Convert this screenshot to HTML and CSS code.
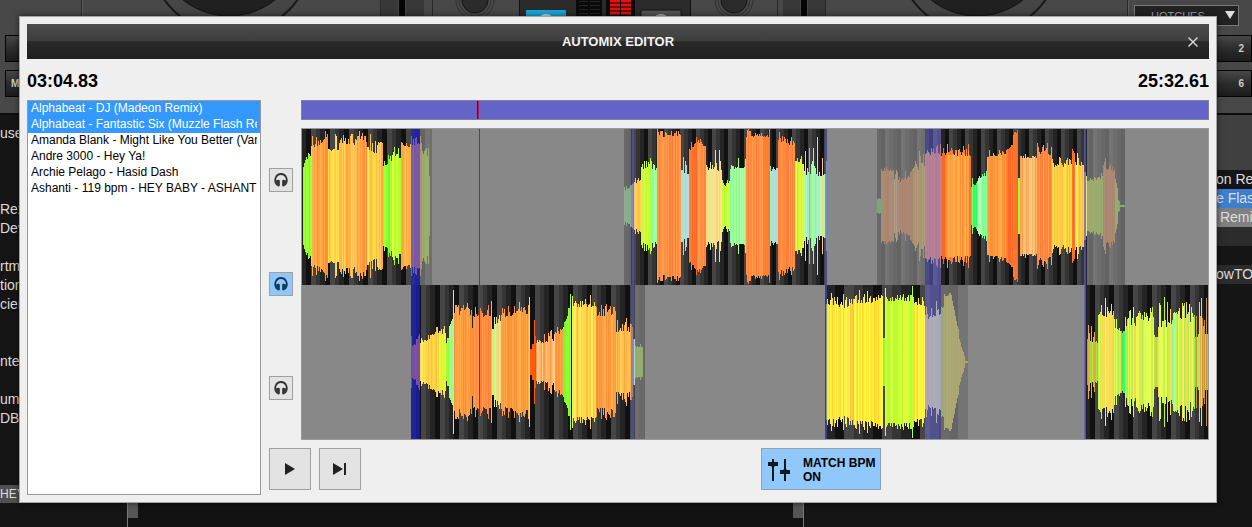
FILE: index.html
```html
<!DOCTYPE html>
<html lang="en">

<head>
  <meta charset="utf-8">
  <meta name="viewport" content="width=device-width, initial-scale=1">
  <title>Automix Editor</title>
  <link rel="stylesheet" href="styles.css">
</head>

<body>

  <div class="app">
    <div class="decks">
      <svg class="deck-art" width="1252" height="115" viewBox="0 0 1252 115" aria-hidden="true">
        <path d="M81.5 0V115M380.5 0V115M432.5 0V115M777.5 0V115M825.5 0V115M1127.5 0V115" stroke="#2a2a2a"/>
        <path d="M82.5 0V115M1128.5 0V115" stroke="#5c5c5c"/>
        <g fill="#383838">
          <rect x="381" y="0" width="17" height="20"/>
          <rect x="406" y="0" width="18" height="20"/>
          <rect x="783" y="0" width="17" height="20"/>
          <rect x="808" y="0" width="17" height="20"/>
        </g>
        <path d="M402 0V20M804 0V20" stroke="#050505" stroke-width="6"/>
        <g fill="#454545" stroke="#191919" stroke-width="2">
          <circle cx="231" cy="-48" r="82"/>
          <circle cx="979" cy="-48" r="82"/>
        </g>
        <g fill="#202020" stroke="#131313">
          <circle cx="229" cy="-58" r="74"/>
          <circle cx="977" cy="-58" r="74"/>
        </g>
        <g fill="none" stroke="#303030">
          <circle cx="475" cy="0" r="19"/>
          <circle cx="475" cy="0" r="16"/>
          <circle cx="734" cy="0" r="19"/>
          <circle cx="734" cy="0" r="16"/>
        </g>
        <g fill="#2b2b2b" stroke="#151515">
          <circle cx="475" cy="0" r="13"/>
          <circle cx="734" cy="0" r="13"/>
        </g>
        <path d="M519.5 -1H690.5V30H519.5z" fill="#2b2b2b" stroke="#111"/>
        <rect x="526" y="10" width="40" height="12" rx="1" fill="#1ba5d8"/>
        <ellipse cx="546" cy="17" rx="6" ry="3" fill="#bfe6f5"/>
        <rect x="641" y="10" width="40" height="12" rx="1" fill="#555" stroke="#151515"/>
        <ellipse cx="661" cy="17" rx="6" ry="3" fill="#aaa"/>
        <rect x="576" y="0" width="26" height="16" fill="#0a0a0a"/>
        <rect x="606" y="0" width="29" height="16" fill="#0a0a0a"/>
        <path d="M579 1.500H588M590 1.500H600M579 5.500H588M590 5.500H600M579 9.500H588M590 9.500H600M579 13.500H588M590 13.500H600" stroke="#252525"/>
        <path d="M610 1H620M621 1H631M610 5H620M621 5H631M610 9H620M621 9H631M610 13H620M621 13H631" stroke="#e01212" stroke-width="3"/>
      </svg>
      <div class="pads pads-left">
        <button class="pad">&nbsp;</button>
        <button class="pad">M</button>
      </div>
      <div class="pads pads-right">
        <button class="hotcues">HOTCUES
          <svg width="12" height="9" viewBox="0 0 12 9" aria-hidden="true"><path d="M1 0H11L6 8z" fill="#ddd"/></svg>
        </button>
        <button class="pad">2</button>
        <button class="pad">6</button>
      </div>
    </div>

    <div class="browser">
      <ul class="rows rows-left">
        <li class="row">use</li>
        <li class="row"></li>
        <li class="row"></li>
        <li class="row"></li>
        <li class="row">Rex</li>
        <li class="row">Dev</li>
        <li class="row"></li>
        <li class="row">rtme</li>
        <li class="row">tion</li>
        <li class="row">cien</li>
        <li class="row"></li>
        <li class="row"></li>
        <li class="row">nte</li>
        <li class="row"></li>
        <li class="row">umb</li>
        <li class="row">DB</li>
        <li class="row"></li>
        <li class="row"></li>
        <li class="row"></li>
        <li class="row row-small">HEY</li>
      </ul>
      <ul class="rows rows-right">
        <li class="row">on Re</li>
        <li class="row row-blue">e Flas</li>
        <li class="row row-grey">&nbsp;Remi</li>
        <li class="row row-dark"></li>
        <li class="row"></li>
        <li class="row row-dark">owTOO</li>
      </ul>
    </div>

    <div class="footer">
      <div class="footer-panel"></div>
    </div>
  </div>

  <div class="overlay">
    <div class="dialog" role="dialog" aria-labelledby="title">
      <div class="titlebar">
        <h1 id="title">AUTOMIX EDITOR</h1>
        <button class="close" aria-label="Close">
          <svg width="12" height="12" viewBox="0 0 12 12"><path d="M1.500 1.500L10.500 10.500M10.500 1.500L1.500 10.500" stroke="#ddd" stroke-width="1.400"/></svg>
        </button>
      </div>

      <div class="times">
        <span>03:04.83</span>
        <span>25:32.61</span>
      </div>

      <div class="editor">
        <select class="playlist" multiple aria-label="Playlist">
          <option selected>Alphabeat - DJ (Madeon Remix)</option>
          <option selected>Alphabeat - Fantastic Six (Muzzle Flash Remix)</option>
          <option>Amanda Blank - Might Like You Better (Van</option>
          <option>Andre 3000 - Hey Ya!</option>
          <option>Archie Pelago - Hasid Dash</option>
          <option>Ashanti - 119 bpm - HEY BABY - ASHANTI</option>
        </select>

        <div class="mixer">
          <div class="tracks">
            <div class="monitors">
              <button class="monitor" aria-label="Listen to deck 1">
                <svg width="14" height="16" viewBox="0 0 14 16"><path d="M3 13C.8 10.500 1 7.500 1.800 5.500C2.800 3 4.700 2 7 2S11.200 3 12.200 5.500C13 7.500 13.200 10.500 11 13" fill="none" stroke="currentColor" stroke-width="1.800"/><path d="M2 8.500Q5 7 5.800 8.500V14Q4 15.200 2.500 13zM12 8.500Q9 7 8.200 8.500V14Q10 15.200 11.500 13z" fill="currentColor"/></svg>
              </button>
              <button class="monitor active" aria-label="Listen to mix">
                <svg width="14" height="16" viewBox="0 0 14 16"><path d="M3 13C.8 10.500 1 7.500 1.800 5.500C2.800 3 4.700 2 7 2S11.200 3 12.200 5.500C13 7.500 13.200 10.500 11 13" fill="none" stroke="currentColor" stroke-width="1.800"/><path d="M2 8.500Q5 7 5.800 8.500V14Q4 15.200 2.500 13zM12 8.500Q9 7 8.200 8.500V14Q10 15.200 11.500 13z" fill="currentColor"/></svg>
              </button>
              <button class="monitor" aria-label="Listen to deck 2">
                <svg width="14" height="16" viewBox="0 0 14 16"><path d="M3 13C.8 10.500 1 7.500 1.800 5.500C2.800 3 4.700 2 7 2S11.200 3 12.200 5.500C13 7.500 13.200 10.500 11 13" fill="none" stroke="currentColor" stroke-width="1.800"/><path d="M2 8.500Q5 7 5.800 8.500V14Q4 15.200 2.500 13zM12 8.500Q9 7 8.200 8.500V14Q10 15.200 11.500 13z" fill="currentColor"/></svg>
              </button>
            </div>
            <div class="timeline">
              <div class="overview"><div class="overview-mark"></div></div>
              <canvas class="waves" id="waves" width="906" height="310"></canvas>
            </div>
          </div>

          <div class="controls">
            <button class="control" aria-label="Play">
              <svg width="16" height="16" viewBox="0 0 16 16"><path d="M3 2L13 8L3 14z" fill="#222"/></svg>
            </button>
            <button class="control" aria-label="Next">
              <svg width="16" height="16" viewBox="0 0 16 16"><path d="M1 2L11 8L1 14zM12 2H14V14H12z" fill="#222"/></svg>
            </button>
            <button class="match active">
              <svg width="24" height="24" viewBox="0 0 24 24"><path d="M6 1V23M18 1V23" stroke="#111820" stroke-width="2"/><path d="M1 4H11V8H8L6 10L4 8H1zM13 12H16L18 10L20 12H23V16H13z" fill="#111820"/></svg>
              <span>MATCH BPM<br>ON</span>
            </button>
          </div>
        </div>
      </div>
    </div>
  </div>

  <script src="waves.js"></script>
</body>

</html>
```
FILE: styles.css
```css
* {
  box-sizing: border-box;
}

body {
  margin: 0;
  background-color: #151515;
  font-family: "Liberation Sans", Arial, Helvetica, sans-serif;
  font-size: 13px;
}

button {
  font-family: inherit;
  cursor: pointer;
}

/* Player behind the dialog */
.app {
  display: flex;
  flex-direction: column;
  height: 100vh;
  overflow: hidden;
}

.decks {
  position: relative;
  flex: none;
  display: flex;
  justify-content: space-between;
  height: 115px;
  overflow: hidden;
  background-color: #484848;
  border-bottom: 2px solid #0d0d0d;
}

.deck-art {
  position: absolute;
  top: 0;
  left: 0;
}

.pads {
  position: relative;
  display: flex;
  flex-direction: column;
  gap: 8px;
}

.pads-left {
  padding: 35px 0 0 5px;
}

.pads-right {
  padding-top: 5px;
  align-items: flex-end;
}

.pad {
  width: 60px;
  height: 27px;
  padding: 0 0 0 5px;
  border: 1px solid #050505;
  background: linear-gradient(#484848, #2c2c2c 50%, #1c1c1c);
  color: #ccc;
  font-size: 10px;
  font-weight: bold;
  text-align: left;
}

.pads-right .pad {
  padding: 0 7px;
  text-align: right;
}

.hotcues {
  display: flex;
  align-items: center;
  justify-content: space-between;
  width: 105px;
  height: 21px;
  margin: 0 13px 1px 0;
  padding: 0 2px 0 16px;
  border: 1px solid #777;
  background-color: #222;
  color: #aaa;
  font-size: 11px;
}

.browser {
  flex: 1;
  display: flex;
  justify-content: space-between;
  overflow: hidden;
}

.rows {
  margin: 0;
  padding: 0;
  list-style: none;
  color: #ddd;
  font-size: 14px;
}

.rows-left {
  width: 20px;
  padding-top: 9px;
}

.rows-right {
  width: 36px;
  border-top: 55px solid #404040;
}

.row {
  height: 19px;
  line-height: 19px;
  overflow: hidden;
  white-space: nowrap;
}

.row-blue {
  background-color: #3d7fcc;
}

.row-grey {
  background-color: #808080;
}

.row-dark {
  background-color: #2c2c2c;
}

.row-small {
  background-color: #505050;
  font-size: 12px;
}

.footer {
  flex: none;
  height: 24px;
  padding: 0 448px 0 127px;
}

.footer-panel {
  height: 24px;
  border: solid #777;
  border-width: 0 1px;
  background:
    linear-gradient(#555, #555) left top / 10px 15px no-repeat,
    linear-gradient(#555, #555) right top / 10px 15px no-repeat,
    #121212;
}

/* Dialog */
.overlay {
  position: absolute;
  inset: 0;
  display: flex;
  padding: 16px 35px 24px 19px;
}

.dialog {
  flex: 1;
  display: flex;
  flex-direction: column;
  min-width: 0;
  padding: 7px;
  border: 1px solid #a5a5a5;
  background-color: #efefef;
  box-shadow: 0 0 6px rgba(0, 0, 0, 0.6);
}

.titlebar {
  flex: none;
  display: grid;
  grid-template-columns: 32px 1fr 32px;
  align-items: center;
  height: 35px;
  background: linear-gradient(#4c4c4c, #3e3e3e 49%, #2b2b2b 50%, #1e1e1e);
  color: #f2f2f2;
}

.titlebar h1 {
  grid-column: 2;
  margin: 0;
  font-size: 13px;
  line-height: 18px;
  text-align: center;
}

.close {
  display: flex;
  justify-content: center;
  padding: 0;
  border: none;
  background: none;
}

.times {
  flex: none;
  display: flex;
  justify-content: space-between;
  height: 41px;
  line-height: 45px;
  color: #000;
  font-size: 18px;
  font-weight: bold;
}

.editor {
  flex: 1;
  display: flex;
  gap: 8px;
  min-height: 0;
}

.playlist {
  flex: none;
  width: 234px;
  padding: 0;
  border: 1px solid #999;
  border-radius: 0;
  outline: none;
  overflow: hidden;
  background-color: #fff;
  color: #000;
  font-family: inherit;
  font-size: 12px;
}

.playlist option {
  min-height: 16px;
  height: 16px;
  padding: 0 3px;
  line-height: 16px;
  overflow: clip;
  overflow-clip-margin: content-box;
}

.playlist option:checked {
  background: linear-gradient(#3399ff, #3399ff);
  -webkit-text-fill-color: #fff;
}

.mixer {
  flex: 1;
  display: flex;
  flex-direction: column;
  gap: 8px;
  min-width: 0;
  padding-bottom: 5px;
}

.tracks {
  flex: 1;
  display: flex;
  gap: 8px;
  min-height: 0;
}

.monitors {
  flex: none;
  display: flex;
  flex-direction: column;
  justify-content: space-between;
  padding: 68px 0 40px;
}

.monitor,
.control {
  display: flex;
  align-items: center;
  justify-content: center;
  padding: 0;
  border: 1px solid #a0a0a0;
  background-color: #e3e3e3;
  color: #333;
}

.monitor {
  width: 24px;
  height: 24px;
}

.monitor.active,
.match.active {
  background-color: #91c8fb;
}

.monitor.active {
  color: #12395c;
}

.timeline {
  flex: 1;
  display: flex;
  flex-direction: column;
  gap: 8px;
  min-width: 0;
}

.overview {
  position: relative;
  flex: none;
  height: 20px;
  border: 1px solid #8080a0;
  background-color: #6464c8;
}

.overview-mark {
  position: absolute;
  top: 0;
  bottom: 0;
  left: 19.3%;
  width: 2px;
  border-left: 1px solid #401050;
  background-color: #c01848;
}

.waves {
  flex: 1;
  display: block;
  width: 100%;
  min-height: 0;
  border: 1px solid #999;
  background-color: #888;
}

.controls {
  flex: none;
  display: flex;
  gap: 8px;
}

.control {
  width: 42px;
  height: 42px;
}

.match {
  display: flex;
  align-items: center;
  gap: 12px;
  width: 120px;
  height: 42px;
  margin: 0 328px 0 auto;
  padding: 2px 0 0 5px;
  border: 1px solid #8fa0b0;
  color: #000;
  font-size: 12px;
  font-weight: bold;
  line-height: 14px;
  text-align: left;
  white-space: nowrap;
}
```
FILE: waves.js
```js
const canvas = document.getElementById('waves');
const ctx = canvas.getContext('2d');

const colors = {
  green: ['#8cff30', '#a0ff35', '#80f82c'],
  lime: ['#d4ff35', '#c0ff3a', '#e8f53c', '#b0ff30'],
  yellow: ['#ffd84a', '#ffe04e', '#f5ee60', '#ffbe40', '#ffd040'],
  sun: ['#fff53a', '#ffea38', '#f2e83a', '#ffd82e', '#fff850'],
  amber: ['#ffb445', '#ffc050', '#ffa63c', '#ffd35a'],
  orange: ['#ff9c3e', '#ffa446', '#ff8e34', '#ffb048'],
  coral: ['#ff9142', '#ff8a3c', '#ff9c50', '#ff7e3a'],
  ember: ['#ff7428', '#ff6824', '#ff7e30'],
  red: ['#ff5a10', '#ff4c0a'],
  peach: ['#ffb060', '#ffc078', '#ff9c48', '#ffcf90'],
  mint: ['#80ff98', '#98ffa0', '#a8ff90', '#b0ffb0'],
  pale: ['#e8e080', '#f0d880', '#d8f080', '#ffe090'],
  ice: ['#a8dcd8', '#b8e0e0', '#c8d8e0', '#a0e8d0'],
  spring: ['#30ff60', '#50ff68', '#70ff70'],
  mixed: ['#e8ff50', '#c8f048', '#f5e058', '#a8f050', '#dcff58', '#ffd850'],
  rough: ['#e8a840', '#d8e048', '#c8943a', '#a0e848']
};

// start, end, half height at start, half height at end, jitter, colour
const tracks = [
  {
    lane: 0, from: 0, to: 131, beat: 19, parts: [
      [2, 11, 42, 54, 6, 'green'], [11, 27, 62, 68, 9, 'orange'], [27, 39, 58, 60, 8, 'yellow'],
      [39, 56, 66, 62, 6, 'amber'], [56, 66, 68, 68, 8, 'orange'], [66, 76, 60, 56, 8, 'yellow'],
      [76, 82, 62, 66, 5, 'amber'], [82, 91, 42, 46, 5, 'green'], [91, 100, 50, 50, 6, 'lime'],
      [100, 121, 60, 65, 6, 'amber'], [121, 128, 54, 50, 4, 'lime'], [128, 129, 30, 30, 0, 'lime']
    ]
  },
  {
    lane: 1, from: 110, to: 344, beat: 19, parts: [
      [110, 119, 18, 22, 5, 'coral'], [119, 130, 20, 27, 5, 'yellow'], [130, 145, 28, 28, 6, 'yellow'],
      [138, 145, 28, 28, 5, 'lime'], [145, 148, 20, 26, 2, 'green'], [148, 152, 38, 44, 4, 'mint'],
      [152, 153, 72, 72, 0, 'lime'], [153, 171, 50, 50, 7, 'orange'], [171, 172, 34, 34, 0, 'orange'],
      [172, 191, 48, 48, 6, 'coral'], [190, 191, 61, 61, 0, 'amber'], [191, 200, 36, 44, 8, 'pale'],
      [200, 228, 48, 52, 7, 'orange'], [228, 229, 65, 65, 0, 'amber'], [229, 231, 13, 13, 0, 'red'],
      [231, 235, 20, 26, 8, 'red'], [233, 234, 42, 42, 0, 'red'], [235, 254, 22, 24, 7, 'peach'],
      [254, 262, 26, 36, 6, 'orange'], [262, 269, 32, 60, 4, 'green'], [269, 270, 68, 68, 0, 'lime'],
      [271, 295, 58, 58, 6, 'yellow'], [295, 315, 48, 50, 6, 'orange'], [315, 332, 34, 34, 8, 'amber'],
      [332, 334, 20, 20, 3, 'ice'], [334, 342, 16, 16, 3, 'lime']
    ]
  },
  {
    lane: 0, from: 323, to: 526, beat: 16, parts: [
      [323, 330, 16, 20, 4, 'mint'], [330, 332, 20, 22, 2, 'ice'], [332, 340, 24, 28, 5, 'amber'],
      [340, 350, 40, 42, 7, 'lime'], [350, 356, 38, 38, 5, 'mint'], [356, 380, 71, 71, 4, 'coral'],
      [380, 388, 36, 36, 8, 'ice'], [388, 396, 58, 64, 5, 'ember'], [396, 405, 66, 60, 4, 'coral'],
      [405, 421, 40, 40, 10, 'pale'], [421, 429, 20, 24, 4, 'lime'], [429, 445, 40, 40, 6, 'mint'],
      [445, 463, 71, 71, 4, 'coral'], [463, 469, 70, 70, 4, 'ember'], [469, 477, 36, 38, 3, 'ice'],
      [477, 494, 68, 60, 5, 'coral'], [494, 503, 46, 42, 4, 'lime'], [503, 526, 33, 33, 7, 'mint'],
      [506, 508, 33, 33, 5, 'ice'], [514, 516, 33, 33, 5, 'ice'],
      [504, 505, 55, 55, 0, 'peach'], [508, 509, 58, 58, 0, 'peach'], [512, 513, 58, 58, 0, 'peach'],
      [516, 517, 69, 69, 0, 'peach'], [521, 522, 48, 48, 0, 'peach'], [525, 526, 45, 45, 0, 'ice']
    ]
  },
  {
    lane: 0, from: 576, to: 824, beat: 16, parts: [
      [576, 580, 6, 8, 1, 'spring'], [580, 593, 36, 36, 3, 'coral'], [593, 597, 24, 40, 5, 'peach'],
      [597, 612, 26, 32, 6, 'coral'], [612, 624, 36, 44, 8, 'amber'], [624, 640, 54, 54, 6, 'coral'],
      [640, 670, 53, 52, 6, 'ember'], [645, 668, 53, 52, 5, 'orange'], [670, 676, 20, 24, 5, 'spring'],
      [676, 686, 26, 34, 4, 'mint'], [686, 705, 50, 54, 4, 'orange'], [705, 712, 56, 62, 2, 'ember'],
      [712, 717, 72, 72, 3, 'ember'], [717, 719, 28, 28, 0, 'green'], [719, 736, 49, 49, 2, 'peach'],
      [736, 751, 54, 54, 6, 'coral'], [751, 783, 41, 43, 6, 'yellow'], [771, 774, 54, 56, 4, 'ember'],
      [783, 786, 34, 28, 2, 'pale'], [786, 802, 26, 30, 5, 'lime'], [802, 814, 40, 38, 8, 'coral'],
      [814, 817, 28, 14, 2, 'lime'], [817, 819, 6, 3, 0, 'green'], [819, 824, 1, 1, 0, 'green']
    ]
  },
  {
    lane: 1, from: 524, to: 667, beat: 38, parts: [
      [525, 549, 60, 57, 7, 'sun'], [549, 568, 60, 60, 4, 'yellow'], [553, 582, 61, 63, 6, 'sun'],
      [582, 584, 24, 24, 0, 'green'], [584, 585, 74, 74, 0, 'lime'], [585, 613, 64, 64, 6, 'lime'],
      [613, 624, 62, 56, 6, 'sun'], [624, 640, 46, 52, 8, 'pale'], [640, 643, 54, 56, 4, 'mint'],
      [643, 651, 67, 67, 2, 'sun'], [651, 658, 60, 28, 2, 'sun'], [658, 664, 22, 3, 1, 'sun'],
      [664, 667, 1, 1, 0, 'lime']
    ]
  },
  {
    lane: 1, from: 784, to: 908, beat: 19, parts: [
      [786, 797, 22, 26, 13, 'rough'], [797, 813, 52, 48, 10, 'mixed'], [813, 820, 38, 34, 8, 'mixed'],
      [820, 824, 28, 34, 4, 'spring'], [824, 835, 42, 42, 13, 'mixed'], [835, 853, 48, 48, 14, 'mixed'],
      [853, 857, 28, 28, 6, 'rough'], [857, 870, 42, 42, 14, 'mixed'], [870, 875, 38, 44, 6, 'mint'],
      [875, 893, 52, 46, 15, 'mixed'], [893, 908, 34, 38, 20, 'rough']
    ]
  }
];

// lane, start, end of the parts that are not heard
const faded = [[0, 119, 131], [0, 323, 330], [1, 334, 344], [0, 576, 624], [1, 640, 667], [0, 786, 824]];

// crossfades between two tracks
const fades = [
  [110, 9, 'rgba(30, 36, 230, 0.6)'],
  [330, 3, 'rgba(80, 80, 200, 0.6)'],
  [524, 2, 'rgba(80, 80, 200, 0.6)'],
  [624, 16, 'rgba(110, 110, 230, 0.5)'],
  [783, 2, 'rgba(90, 90, 200, 0.7)']
];

const shades = ['#242424', '#111', '#464646', '#353535'];
const lanes = [
  { top: 0, height: 156, center: 77 },
  { top: 156, height: 154, center: 233 }
];

let seed = 7;
function random() {
  seed = (seed * 16807) % 2147483647;
  return seed / 2147483647;
}

function drawTrack(track) {
  const lane = lanes[track.lane];
  const step = track.beat / 4;

  for (let x = track.from; x < track.to; x++) {
    ctx.fillStyle = shades[Math.floor((x - track.from) / step) % 4];
    ctx.fillRect(x, lane.top, 1, lane.height);
  }

  track.parts.forEach(function ([start, end, h0, h1, jitter, name]) {
    const palette = colors[name];
    for (let x = start; x < end; x++) {
      const base = h0 + (h1 - h0) * (x - start) / (end - start);
      const h = Math.round(base + (random() * random() * 2.6 - 0.5) * jitter);
      ctx.fillStyle = palette[Math.floor(random() * palette.length)];
      ctx.fillRect(x, lane.center - h, 1, h * 2);
    }
  });
}

ctx.fillStyle = '#888';
ctx.fillRect(0, 0, canvas.width, canvas.height);

// positions count from the outer edge of the border
ctx.translate(-1, 0);
tracks.forEach(drawTrack);

faded.forEach(function ([lane, start, end]) {
  ctx.fillStyle = 'rgba(136, 136, 136, 0.7)';
  ctx.fillRect(start, lanes[lane].top, end - start, lanes[lane].height);
});

fades.forEach(function ([x, width, color]) {
  ctx.fillStyle = color;
  ctx.fillRect(x, 0, width, canvas.height);
});

// playhead
ctx.fillStyle = '#d01414';
ctx.fillRect(178, 0, 1, canvas.height);
```
